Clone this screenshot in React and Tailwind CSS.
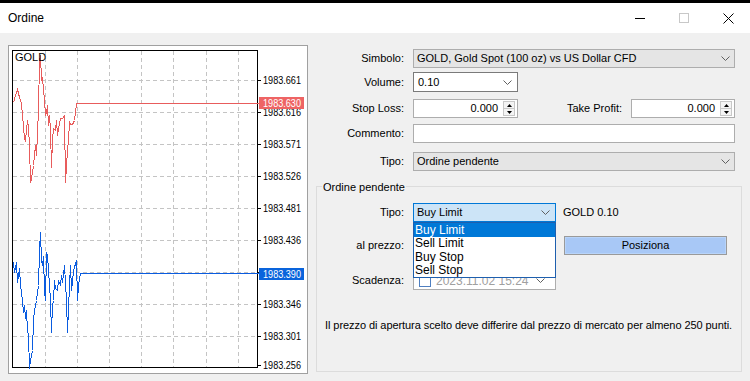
import React from "react";

const FONT = "font-['Liberation_Sans',Arial,sans-serif]";

const Chevron = ({ color = "#606060" }) => (
  <svg width="9" height="5" viewBox="0 0 9 5" className="shrink-0">
    <path d="M0.5 0.5 L4.5 4.5 L8.5 0.5" stroke={color} fill="none" strokeWidth="1" />
  </svg>
);

const Spinner = () => (
  <div className="flex flex-col w-[12px] h-[15px] mr-[2px] border border-[#c8c8c8] bg-[#f4f4f4] shrink-0">
    <div className="flex-1 flex items-center justify-center border-b border-[#c8c8c8]">
      <svg width="5" height="3" viewBox="0 0 5 3"><path d="M0 3 L2.5 0 L5 3 Z" fill="#000" /></svg>
    </div>
    <div className="flex-1 flex items-center justify-center">
      <svg width="5" height="3" viewBox="0 0 5 3"><path d="M0 0 L2.5 3 L5 0 Z" fill="#000" /></svg>
    </div>
  </div>
);

const Label = ({ children }) => (
  <div className="w-[88px] text-right text-black shrink-0">{children}</div>
);

const redPts = [
  [13, 102], [15, 95], [17, 89], [19, 97], [21, 103], [22, 115], [24, 138], [25, 140], [27, 120],
  [28, 127], [29, 145], [30, 182], [31, 178], [33, 165], [35, 145], [36, 155], [38, 110], [39, 60],
  [40, 55], [41, 80], [42, 78], [44, 100], [45, 115], [46, 112], [47, 105], [48, 125], [49, 115],
  [50, 130], [51, 167], [52, 140], [53, 128], [55, 130], [56, 120], [57, 135], [58, 128], [60, 118],
  [62, 118], [64, 115], [65, 182], [67, 150], [68, 140], [69, 122], [70, 124], [72, 124], [74, 120],
  [76, 103], [258, 103],
];

const bluePts = [
  [13, 262], [14, 272], [16, 262], [17, 282], [19, 268], [20, 285], [22, 300], [23, 312], [24, 305],
  [25, 318], [26, 310], [27, 330], [28, 335], [29, 368], [30, 360], [32, 350], [33, 320], [34, 310],
  [36, 300], [37, 292], [38, 285], [39, 250], [40, 232], [41, 260], [42, 265], [43, 256], [44, 290],
  [45, 300], [46, 252], [47, 255], [48, 270], [50, 300], [51, 332], [52, 305], [53, 300], [54, 280],
  [55, 288], [57, 290], [58, 280], [60, 285], [61, 275], [62, 282], [64, 265], [66, 300], [67, 332],
  [68, 308], [69, 285], [70, 265], [71, 290], [72, 282], [73, 270], [76, 260], [77, 300], [78, 285],
  [80, 273], [258, 273],
];

const toPath = (pts) => pts.map((p, i) => `${i ? "L" : "M"}${p[0] - 9 + 0.5} ${p[1] - 46 + 0.5}`).join(" ");

const gridX = [36, 68, 100, 132, 164, 197, 229];
const gridY = [34, 66, 98, 130, 162, 194, 226, 258, 290];
const labels = [
  ["1983.661", 34], ["1983.616", 66], ["1983.571", 98], ["1983.526", 130], ["1983.481", 162],
  ["1983.436", 194], ["1983.346", 258], ["1983.301", 290], ["1983.256", 319],
];

const SF = "Liberation Sans, Arial, sans-serif";

const Chart = () => (
  <div className="w-[300px] h-[329px] border border-[#a0a0a0] bg-white shrink-0">
    <svg width="298" height="327" viewBox="0 0 298 327" className="block">
      {gridX.map((x) => (
        <line key={"x" + x} x1={x + 0.5} y1="5" x2={x + 0.5} y2="321" stroke="#c4c4c4" strokeDasharray="4 3" />
      ))}
      {gridY.map((y) => (
        <line key={"y" + y} x1="4" y1={y + 0.5} x2="249" y2={y + 0.5} stroke="#c4c4c4" strokeDasharray="4 3" />
      ))}
      <rect x="3.5" y="4.5" width="245" height="317" fill="none" stroke="#000" />
      {gridY.concat([319]).map((y) => (
        <line key={"t" + y} x1="249" y1={y + 0.5} x2="252" y2={y + 0.5} stroke="#000" />
      ))}
      <path d={toPath(redPts)} fill="none" stroke="#e85c5c" strokeWidth="1" shapeRendering="crispEdges" />
      <path d={toPath(bluePts)} fill="none" stroke="#0a5ce0" strokeWidth="1" shapeRendering="crispEdges" />
      <text x="6" y="15" fontSize="11" fontFamily={SF} fill="#000">GOLD</text>
      {labels.map(([t, y]) => (
        <text key={t} x="254" y={y + 4} fontSize="11" fontFamily={SF} fill="#000" textLength="38" lengthAdjust="spacingAndGlyphs">{t}</text>
      ))}
      <rect x="250" y="51" width="45" height="12" fill="#ee6464" />
      <text x="254" y="61" fontSize="11" fontFamily={SF} fill="#fff" textLength="38" lengthAdjust="spacingAndGlyphs">1983.630</text>
      <rect x="250" y="222" width="45" height="12" fill="#0a64dc" />
      <text x="254" y="232" fontSize="11" fontFamily={SF} fill="#fff" textLength="38" lengthAdjust="spacingAndGlyphs">1983.390</text>
    </svg>
  </div>
);

export default function App() {
  return (
    <div className={`w-[750px] h-[381px] bg-[#f0f0f0] overflow-hidden flex flex-col text-[11px] ${FONT}`}>
      <div className="h-[3px] bg-black shrink-0" />
      <div className="h-[30px] bg-white flex items-center shrink-0">
        <div className="ml-[8px] text-[12px] text-black">Ordine</div>
        <div className="ml-auto flex items-center">
          <div className="w-[10px] h-[1px] bg-black mr-[34px]" />
          <div className="w-[10px] h-[10px] border border-[#c8c8c8] mr-[34px]" />
          <svg width="11" height="11" viewBox="0 0 11 11" className="mr-[16px]">
            <path d="M0.5 0.5 L10.5 10.5 M10.5 0.5 L0.5 10.5" stroke="#000" strokeWidth="1" />
          </svg>
        </div>
      </div>
      <div className="flex pt-[12px] pl-[8px]">
        <Chart />
        <div className="ml-[8px] w-[426px] flex flex-col pt-[4px]">
          {/* Simbolo */}
          <div className="flex items-center h-[19px]">
            <Label>Simbolo:</Label>
            <div className="ml-[9px] w-[322px] h-[19px] bg-[#e5e5e5] border border-[#adadad] flex items-center pl-[3px] pr-[4px]">
              <span className="flex-1">GOLD, Gold Spot (100 oz) vs US Dollar CFD</span>
              <Chevron />
            </div>
          </div>
          {/* Volume */}
          <div className="flex items-center h-[20px] mt-[4px]">
            <Label>Volume:</Label>
            <div className="ml-[9px] w-[105px] h-[20px] bg-white border border-[#7a7a7a] flex items-center pl-[4px] pr-[5px]">
              <span className="flex-1">0.10</span>
              <Chevron />
            </div>
          </div>
          {/* Stop Loss / Take Profit */}
          <div className="flex items-center h-[19px] mt-[7px]">
            <Label>Stop Loss:</Label>
            <div className="ml-[9px] w-[105px] h-[19px] bg-white border border-[#adadad] flex items-center">
              <span className="flex-1 text-right pr-[5px]">0.000</span>
              <Spinner />
            </div>
            <div className="w-[104px] text-right">Take Profit:</div>
            <div className="ml-[9px] w-[104px] h-[19px] bg-white border border-[#adadad] flex items-center">
              <span className="flex-1 text-right pr-[5px]">0.000</span>
              <Spinner />
            </div>
          </div>
          {/* Commento */}
          <div className="flex items-center h-[19px] mt-[6px]">
            <Label>Commento:</Label>
            <div className="ml-[9px] w-[322px] h-[19px] bg-white border border-[#adadad]" />
          </div>
          {/* Tipo */}
          <div className="flex items-center h-[19px] mt-[9px]">
            <Label>Tipo:</Label>
            <div className="ml-[9px] w-[322px] h-[19px] bg-[#e5e5e5] border border-[#adadad] flex items-center pl-[3px] pr-[4px]">
              <span className="flex-1">Ordine pendente</span>
              <Chevron />
            </div>
          </div>
          {/* Group */}
          <div className="relative mt-[15px] h-[186px] border border-[#dcdcdc] flex flex-col pt-[16px]">
            <div className="absolute -top-[8px] left-[5px] px-[1px] bg-[#f0f0f0]">Ordine pendente</div>
            <div className="flex items-center h-[19px]">
              <div className="w-[87px] text-right shrink-0">Tipo:</div>
              <div className="relative ml-[9px] w-[143px] h-[19px] shrink-0">
                <div className="w-full h-full bg-[#cce4f7] border border-[#0078d7] flex items-center pl-[3px] pr-[5px]">
                  <span className="flex-1">Buy Limit</span>
                  <Chevron />
                </div>
                <div className="absolute top-[19px] left-0 w-[143px] bg-white border border-[#1e5fae] z-10 text-[12px] leading-[13px]">
                  <div className="h-[14px] bg-[#0078d7] text-white pl-[1px] pt-[1px]">Buy Limit</div>
                  <div className="h-[13px] pl-[1px]">Sell Limit</div>
                  <div className="h-[14px] pl-[1px] pt-[1px]">Buy Stop</div>
                  <div className="h-[13px] pl-[1px]">Sell Stop</div>
                </div>
              </div>
              <div className="ml-[7px]">GOLD 0.10</div>
            </div>
            <div className="flex items-center h-[19px] mt-[14px]">
              <div className="w-[87px] text-right shrink-0">al prezzo:</div>
              <div className="ml-[9px] w-[143px] h-[19px] bg-white border border-[#adadad] shrink-0" />
              <div className="ml-[8px] w-[163px] h-[19px] bg-[#a8c8f6] border border-[#9a9a9a] flex items-center justify-center shadow-[inset_0_0_0_1px_#b8d4fa]">
                Posiziona
              </div>
            </div>
            <div className="flex items-center h-[19px] mt-[16px]">
              <div className="w-[87px] text-right shrink-0">Scadenza:</div>
              <div className="ml-[9px] w-[143px] h-[19px] bg-white border border-[#adadad] flex items-center pl-[5px] pr-[10px] shrink-0">
                <div className="w-[12px] h-[12px] border border-[#4f7fc0] bg-white shrink-0" />
                <span className="ml-[5px] flex-1 text-[#a0a0a0] text-[12px]">2023.11.02 15:24</span>
                <Chevron />
              </div>
            </div>
            <div className="mt-[28px] pl-[8px] leading-[14px] tracking-[-0.07px]">
              Il prezzo di apertura scelto deve differire dal prezzo di mercato per almeno 250 punti.
            </div>
          </div>
        </div>
      </div>
    </div>
  );
}
